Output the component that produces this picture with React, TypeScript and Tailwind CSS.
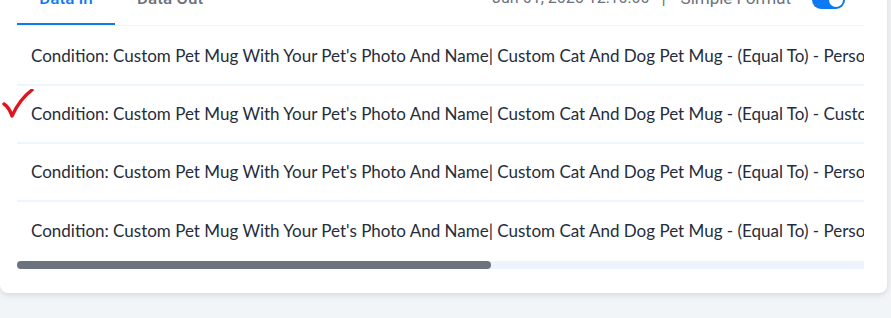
import React from 'react';

const rows = [
  "Condition: Custom Pet Mug With Your Pet's Photo And Name| Custom Cat And Dog Pet Mug - (Equal To) - Personalized Photo Mug",
  "Condition: Custom Pet Mug With Your Pet's Photo And Name| Custom Cat And Dog Pet Mug - (Equal To) - Custom Pet Mug",
  "Condition: Custom Pet Mug With Your Pet's Photo And Name| Custom Cat And Dog Pet Mug - (Equal To) - Personalized Photo Mug",
  "Condition: Custom Pet Mug With Your Pet's Photo And Name| Custom Cat And Dog Pet Mug - (Equal To) - Personalized Photo Mug",
];

const CheckMark = () => (
  <svg width="32" height="30" viewBox="0 0 32 30">
    <path d="M2 15 C5 17 8 21 10 27 C15 16 22 7 30 1" fill="none" stroke="#e0141e" strokeWidth="3.4" strokeLinecap="round" strokeLinejoin="round" />
  </svg>
);

const App: React.FC = () => {
  return (
    <div className="h-[318px] overflow-hidden bg-[#f2f5f8] font-['Roboto',sans-serif]">
      <div className="-mt-[14px] w-[887px] rounded-b-lg bg-white pl-[17px] pr-[23px] pb-[24px] shadow-[0_2px_6px_rgba(0,0,0,0.12)]">
        <div className="flex h-[40px] items-end justify-between border-b border-[#eef5fd]">
          <div className="flex items-end">
            <div className="w-[98px] border-b-2 border-[#0d7af2] pb-[12px] text-center text-[17px] font-medium text-[#0d7af2]">Data In</div>
            <div className="ml-[22px] pb-[14px] text-[17px] font-medium text-[#6b7280]">Data Out</div>
          </div>
          <div className="flex items-center pb-[14px] pr-[19px] text-[17px] text-[#6b7280]">
            <span className="text-[16px]">Jun 01, 2025 12:10:00</span>
            <span className="ml-[12px]">|</span>
            <span className="ml-[15px]">Simple Format</span>
            <div className="ml-[21px] mt-[4px] flex h-[18px] w-[33px] items-center justify-end rounded-full bg-[#0d7af2] px-[2px]">
              <div className="h-[14px] w-[14px] rounded-full bg-white" />
            </div>
          </div>
        </div>
        <div className="relative">
          <div className="absolute -left-[15px] top-[63px] z-10">
            <CheckMark />
          </div>
          <div className="overflow-hidden pt-[2px]">
            {rows.map((r, i) => (
              <div key={i} className={`flex h-[58px] items-center whitespace-nowrap pl-[14px] text-[17px] text-[#252d3c] font-['Lato',sans-serif] ${i < rows.length - 1 ? 'border-b-2 border-[#eef5fd]' : ''}`}>
                {r}
              </div>
            ))}
          </div>
          <div className="mt-[1px] h-[8px] w-full bg-[#edf4fd]">
            <div className="h-[8px] w-[474px] rounded-full bg-[#6b737c]" />
          </div>
        </div>
      </div>
    </div>
  );
};

export default App;
